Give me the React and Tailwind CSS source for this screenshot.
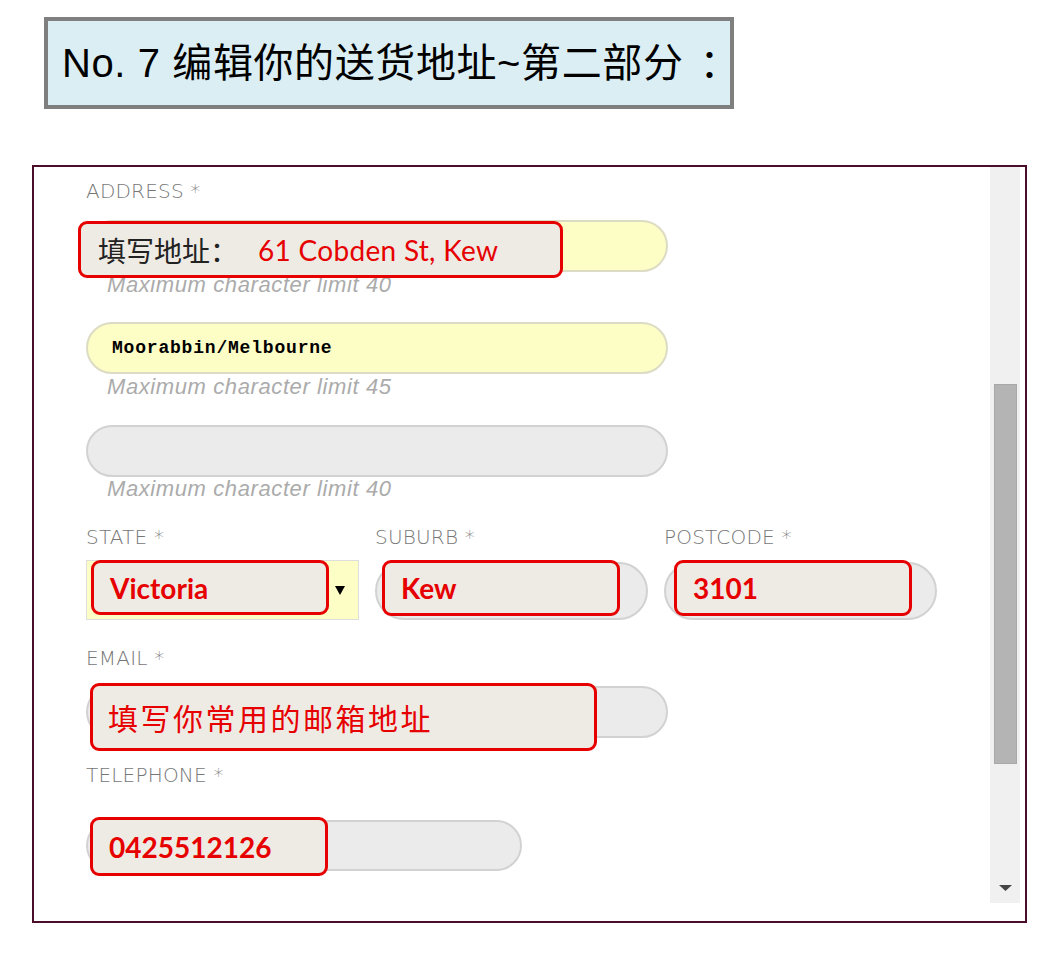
import React from "react";

const labelFont = { fontFamily: '"DejaVu Sans", sans-serif' };
const cjk = '"Noto Sans CJK SC", sans-serif';

function Label({ children, className = "" }) {
  return (
    <div
      className={`text-[20px] leading-[20px] font-extralight text-[#777] tracking-[0.2px] ${className}`}
      style={labelFont}
    >
      {children}
    </div>
  );
}

function Helper({ children, className = "" }) {
  return (
    <div
      className={`pl-[21px] text-[22px] leading-[22px] italic text-[#ababab] tracking-[0.6px] ${className}`}
      style={{ fontFamily: '"Liberation Sans", sans-serif' }}
    >
      {children}
    </div>
  );
}

// red annotation box laid over a field
function Note({ className = "", children }) {
  return (
    <div
      className={`absolute border-[3px] border-[#e60000] rounded-[9px] bg-[#eeebe4] flex items-center ${className}`}
    >
      {children}
    </div>
  );
}

function RedBold({ children }) {
  return (
    <span
      className="text-[28px] font-bold text-[#e60000]"
      style={{ fontFamily: "Lato, sans-serif" }}
    >
      {children}
    </span>
  );
}

function Triangle({ className = "", w = 10, h = 8, color = "#000" }) {
  return (
    <svg className={className} width={w} height={h} viewBox={`0 0 ${w} ${h}`}>
      <polygon points={`0,0 ${w},0 ${w / 2},${h}`} fill={color} />
    </svg>
  );
}

export default function App() {
  return (
    <div className="w-[1051px] h-[960px] bg-white pt-[17px]">
      {/* Title */}
      <div className="ml-[44px] w-[690px] h-[92px] border-4 border-[#7f7f7f] bg-[#dbeef3] flex items-center pl-[14px]">
        <span
          className="text-[40px] text-black leading-none whitespace-nowrap tracking-[0.6px]"
          style={{ fontFamily: `"Liberation Sans", ${cjk}` }}
        >
          No. 7 编辑你的送货地址~第二部分
          <span className="ml-[16px]">：</span>
        </span>
      </div>

      {/* Form panel */}
      <div className="mt-[56px] ml-[32px] w-[995px] h-[758px] border-2 border-[#4b0d2c] flex">
        <div className="flex-1 pl-[52px] pt-[14px] flex flex-col">
          {/* Address */}
          <Label>ADDRESS *</Label>
          <div className="relative mt-[19px]">
            <div className="w-[582px] h-[52px] rounded-full border-2 border-[#dcdcc4] bg-[#fdfdc6]" />
            <Note className="-left-[8px] top-[1px] w-[485px] h-[57px] pl-[17px]">
              <span className="text-[28px] text-[#222] leading-none" style={{ fontFamily: cjk }}>
                填写地址：
              </span>
              <span
                className="ml-[20px] text-[28px] text-[#e60000] tracking-[0.3px]"
                style={{ fontFamily: "Lato, sans-serif" }}
              >
                61 Cobden St, Kew
              </span>
            </Note>
          </div>
          <Helper className="mt-[2px]">Maximum character limit 40</Helper>

          <div className="mt-[26px] w-[582px] h-[52px] rounded-full border-2 border-[#dcdcc4] bg-[#fdfdc6] flex items-center pl-[24px]">
            <span
              className="text-[18px] font-bold text-black tracking-[0.8px]"
              style={{ fontFamily: '"Liberation Mono", monospace' }}
            >
              Moorabbin/Melbourne
            </span>
          </div>
          <Helper className="mt-[2px]">Maximum character limit 45</Helper>

          <div className="mt-[27px] w-[582px] h-[52px] rounded-full border-2 border-[#d2d2d2] bg-[#ebebeb]" />
          <Helper className="mt-[1px]">Maximum character limit 40</Helper>

          {/* State / Suburb / Postcode */}
          <div className="mt-[27px] flex">
            <Label className="w-[289px]">STATE *</Label>
            <Label className="w-[289px]">SUBURB *</Label>
            <Label>POSTCODE *</Label>
          </div>
          <div className="mt-[13px] flex items-start">
            <div className="relative w-[273px] h-[60px] bg-[#fdfdc6] border border-[#dedede] flex items-center justify-end pr-[13px]">
              <Triangle w={10} h={9} />
              <Note className="left-[4px] -top-[1px] w-[238px] h-[55px] pl-[16px]">
                <RedBold>Victoria</RedBold>
              </Note>
            </div>
            <div className="relative ml-[16px] mt-[2px] w-[273px] h-[58px] rounded-full border-2 border-[#d2d2d2] bg-[#ebebeb]">
              <Note className="left-[5px] -top-[4px] w-[238px] h-[56px] pl-[16px]">
                <RedBold>Kew</RedBold>
              </Note>
            </div>
            <div className="relative ml-[16px] mt-[2px] w-[273px] h-[58px] rounded-full border-2 border-[#d2d2d2] bg-[#ebebeb]">
              <Note className="left-[8px] -top-[4px] w-[238px] h-[56px] pl-[16px]">
                <RedBold>3101</RedBold>
              </Note>
            </div>
          </div>

          {/* Email */}
          <Label className="mt-[28px]">EMAIL *</Label>
          <div className="relative mt-[18px]">
            <div className="w-[582px] h-[52px] rounded-full border-2 border-[#d2d2d2] bg-[#ebebeb]" />
            <Note className="left-[4px] -top-[3px] w-[507px] h-[68px] pl-[15px]">
              <span className="text-[30px] text-[#e60000] tracking-[2.5px]" style={{ fontFamily: cjk }}>
                填写你常用的邮箱地址
              </span>
            </Note>
          </div>

          {/* Telephone */}
          <Label className="mt-[27px]">TELEPHONE *</Label>
          <div className="relative mt-[35px]">
            <div className="w-[436px] h-[51px] rounded-full border-2 border-[#d2d2d2] bg-[#ebebeb]" />
            <Note className="left-[4px] -top-[3px] w-[238px] h-[59px] pl-[16px]">
              <RedBold>0425512126</RedBold>
            </Note>
          </div>
        </div>

        {/* Scrollbar */}
        <div className="mr-[5px] w-[30px] h-[736px] bg-[#f0f0f0] flex flex-col items-center">
          <div className="mt-[217px] w-[23px] h-[380px] bg-[#b4b4b4] border border-[#a8a8a8]" />
          <Triangle className="mt-auto mb-[12px]" w={13} h={6} color="#444" />
        </div>
      </div>
    </div>
  );
}
